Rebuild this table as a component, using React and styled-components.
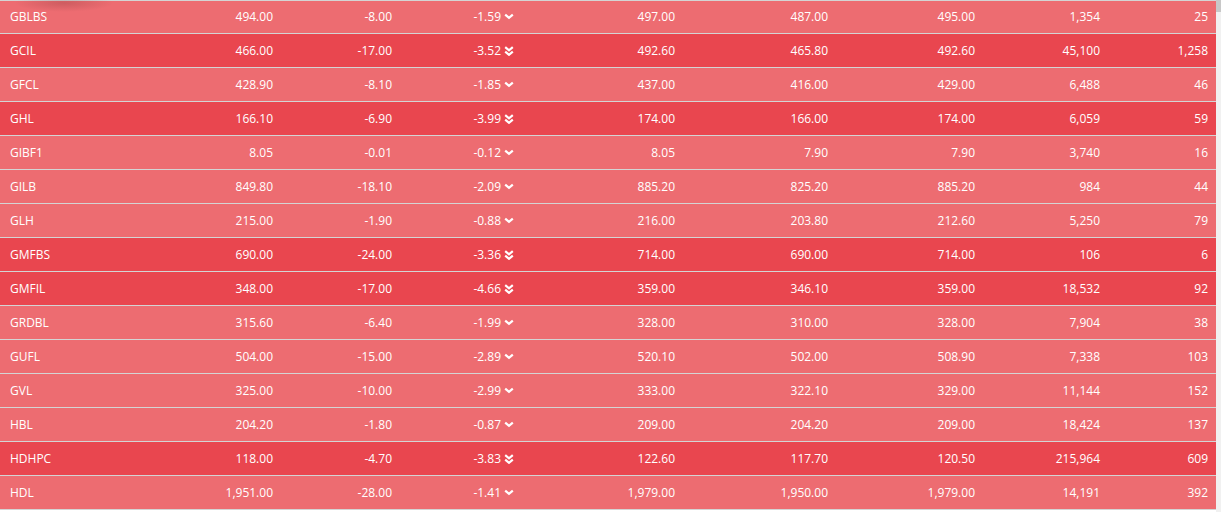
import React from 'react';
import styled, {createGlobalStyle} from 'styled-components';

const GlobalStyle = createGlobalStyle`
    html, body {
        margin: 0;
        padding: 0;
        background: #fff;
        overflow: hidden;
    }
    body {
        font-family: "Open Sans", "Liberation Sans", sans-serif;
    }
`;

const rows = [
    ['GBLBS', '494.00', '-8.00', '-1.59', '497.00', '487.00', '495.00', '1,354', '25'],
    ['GCIL', '466.00', '-17.00', '-3.52', '492.60', '465.80', '492.60', '45,100', '1,258'],
    ['GFCL', '428.90', '-8.10', '-1.85', '437.00', '416.00', '429.00', '6,488', '46'],
    ['GHL', '166.10', '-6.90', '-3.99', '174.00', '166.00', '174.00', '6,059', '59'],
    ['GIBF1', '8.05', '-0.01', '-0.12', '8.05', '7.90', '7.90', '3,740', '16'],
    ['GILB', '849.80', '-18.10', '-2.09', '885.20', '825.20', '885.20', '984', '44'],
    ['GLH', '215.00', '-1.90', '-0.88', '216.00', '203.80', '212.60', '5,250', '79'],
    ['GMFBS', '690.00', '-24.00', '-3.36', '714.00', '690.00', '714.00', '106', '6'],
    ['GMFIL', '348.00', '-17.00', '-4.66', '359.00', '346.10', '359.00', '18,532', '92'],
    ['GRDBL', '315.60', '-6.40', '-1.99', '328.00', '310.00', '328.00', '7,904', '38'],
    ['GUFL', '504.00', '-15.00', '-2.89', '520.10', '502.00', '508.90', '7,338', '103'],
    ['GVL', '325.00', '-10.00', '-2.99', '333.00', '322.10', '329.00', '11,144', '152'],
    ['HBL', '204.20', '-1.80', '-0.87', '209.00', '204.20', '209.00', '18,424', '137'],
    ['HDHPC', '118.00', '-4.70', '-3.83', '122.60', '117.70', '120.50', '215,964', '609'],
    ['HDL', '1,951.00', '-28.00', '-1.41', '1,979.00', '1,950.00', '1,979.00', '14,191', '392'],
];

// a drop of more than 3% gets the darker row and the double arrow
const isSharp = (pct) => parseFloat(pct) <= -3;

const Chevron = ({double}) => (
    double ? (
        <svg width="10" height="10" viewBox="0 0 10 10">
            <polyline points="1.2,1.2 5,4.3 8.8,1.2" fill="none" stroke="#fff" strokeWidth="2.2" />
            <polyline points="1.2,5.7 5,8.8 8.8,5.7" fill="none" stroke="#fff" strokeWidth="2.2" />
        </svg>
    ) : (
        <svg width="10" height="7" viewBox="0 0 10 7">
            <polyline points="1.2,1.6 5,4.9 8.8,1.6" fill="none" stroke="#fff" strokeWidth="2.2" />
        </svg>
    )
);

function App() {
    return (
        <Page>
            <GlobalStyle />
            <Table>
                {rows.map((r) => {
                    const sharp = isSharp(r[3]);
                    return (
                        <Row key={r[0]} sharp={sharp}>
                            <Symbol>{r[0]}</Symbol>
                            <Num>{r[1]}</Num>
                            <Num>{r[2]}</Num>
                            <Pct>
                                <span>{r[3]}</span>
                                <Chevron double={sharp} />
                            </Pct>
                            <Num>{r[4]}</Num>
                            <Num>{r[5]}</Num>
                            <Num>{r[6]}</Num>
                            <Num>{r[7]}</Num>
                            <Num>{r[8]}</Num>
                        </Row>
                    );
                })}
            </Table>
            <ScrollTrack>
                <ScrollButton />
            </ScrollTrack>
        </Page>
    );
}

const Page = styled.div`
    display: flex;
    height: 512px;
    width: 1221px;
    overflow: hidden;
    background: #fff;
`;

const Table = styled.div`
    position: relative;
    flex: 1;

    &::before {
        content: '';
        position: absolute;
        top: 0;
        left: 0;
        right: 0;
        height: 1px;
        background: #d4d4d4;
    }
    &::after {
        content: '';
        position: absolute;
        top: -6px;
        left: 14px;
        width: 100px;
        height: 18px;
        pointer-events: none;
        background: radial-gradient(ellipse at center, rgba(80, 30, 30, 0.2) 0%, rgba(80, 30, 30, 0) 70%);
    }
`;

const Row = styled.div`
    display: grid;
    grid-template-columns: 160px 121px 119px 122px 161px 153px 147px 125px 108px;
    height: 33px;
    align-items: center;
    background: ${(p) => (p.sharp ? '#e9464f' : '#ed6c71')};
    border-bottom: 1px solid #d4d4d4;
    color: #fff;
    font-size: 12px;
`;

const Symbol = styled.div`
    padding-left: 10px;
    text-align: left;
`;

const Num = styled.div`
    padding-right: 8px;
    text-align: right;
`;

const Pct = styled.div`
    display: flex;
    justify-content: flex-end;
    align-items: center;
    gap: 3px;
    padding-right: 8px;
`;

const ScrollTrack = styled.div`
    width: 5px;
    flex-shrink: 0;
    background: #f1f1f1;
`;

const ScrollButton = styled.div`
    height: 12px;
    background: #c8c8c8;
`;

export default App;
